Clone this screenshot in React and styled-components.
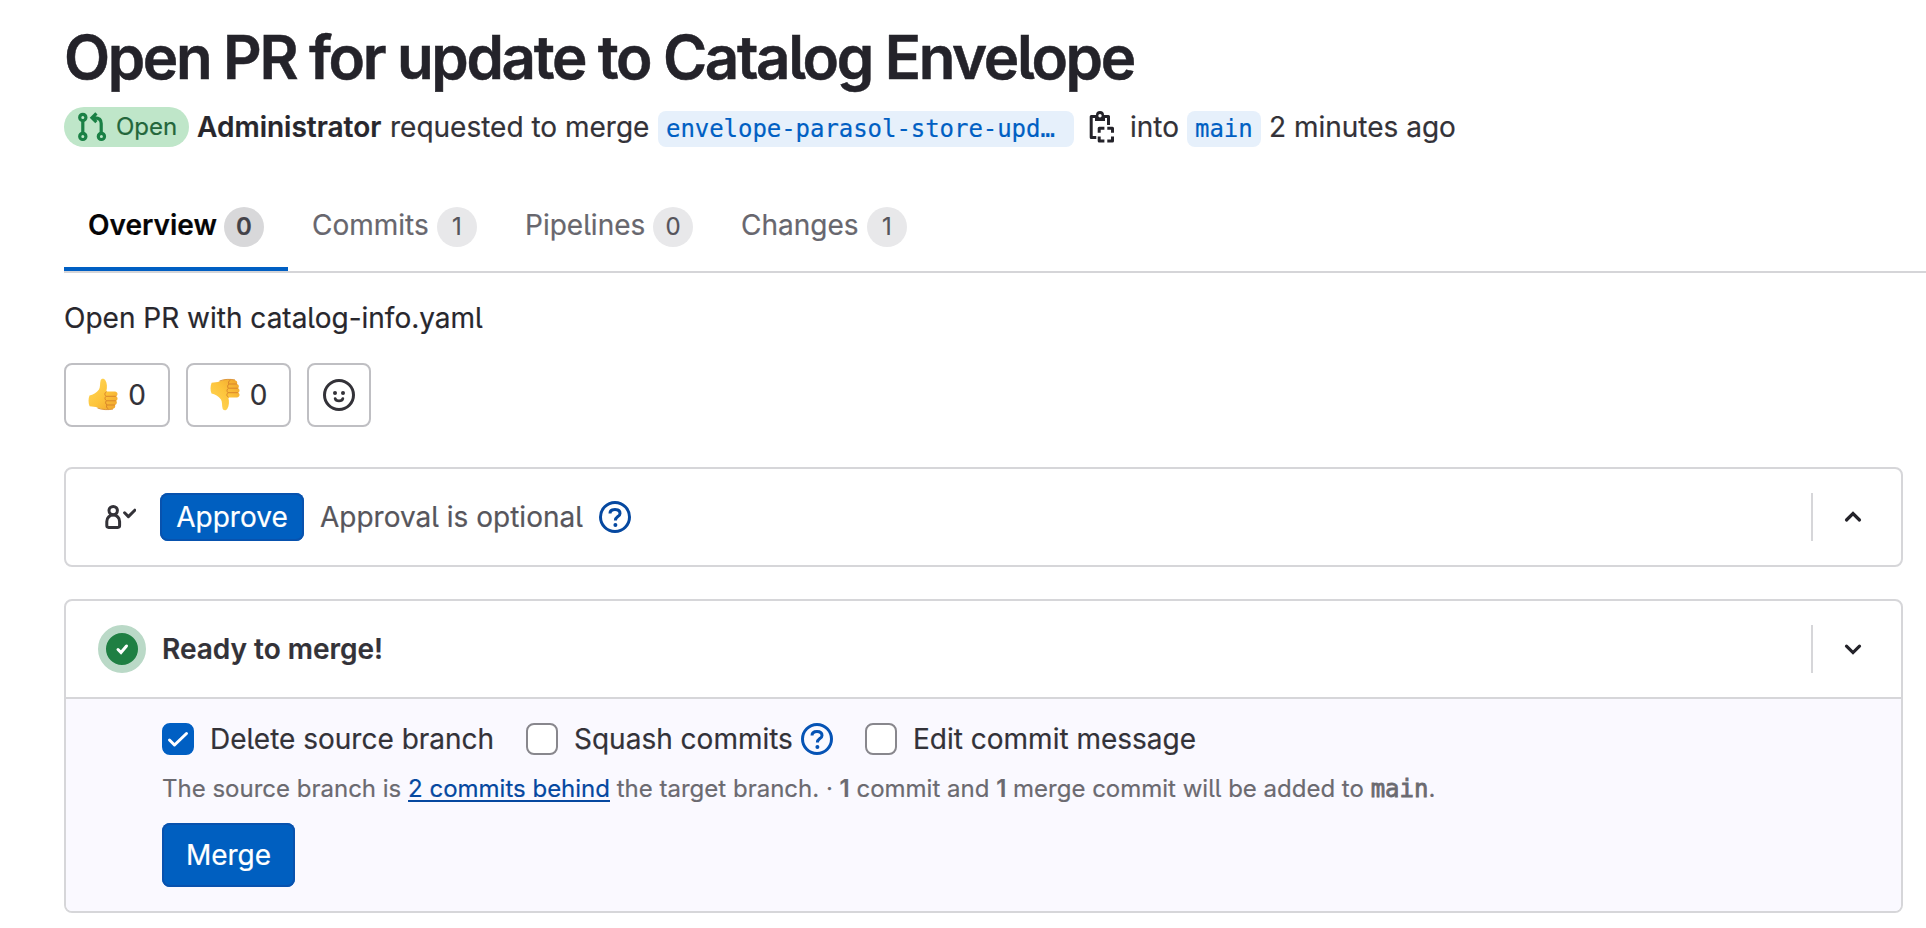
import React from "react";
import styled, { createGlobalStyle, css } from "styled-components";

const Global = createGlobalStyle`
  html, body { margin: 0; padding: 0; background: #fff; overflow: hidden; }
  * { box-sizing: border-box; }
  body {
    font-family: Inter, "Noto Sans", sans-serif;
    font-size: 28px;
    line-height: 40px;
    color: #333238;
    font-feature-settings: "cv05" 1;
    -webkit-font-smoothing: antialiased;
    -webkit-text-stroke: 0.2px;
  }
  button { font: inherit; font-feature-settings: inherit; color: inherit; margin: 0; }
  svg { display: block; flex: none; }
`;

const Page = styled.main`
  width: 1926px;
  height: 928px;
  padding: 23px 0 0 64px;
  overflow: hidden;
  white-space: nowrap;
`;

const Title = styled.h1`
  margin: 0;
  height: 68px;
  font-size: 60px;
  line-height: 68px;
  font-weight: 600;
  letter-spacing: -2.35px;
  color: #24232a;
  -webkit-text-stroke: 0.5px;
`;

const Meta = styled.div`
  display: flex;
  align-items: center;
  height: 40px;
  margin-top: 16px;
`;

const StatusBadge = styled.span`
  display: flex;
  align-items: center;
  gap: 8px;
  width: 125px;
  height: 40px;
  padding-left: 12px;
  border-radius: 20px;
  background: #bfe6c9;
  color: #24663b;
  font-size: 24px;
  margin-right: 8px;
  svg { color: #1a8045; }
`;

const Text = styled.span`
  display: block;
  width: ${(p) => (p.$w ? `${p.$w}px` : "auto")};
  margin-left: ${(p) => p.$ml || 0}px;
  flex: none;
  font-weight: ${(p) => (p.$bold ? 600 : 400)};
  color: ${(p) => p.$color || "inherit"};
`;

const BranchChip = styled.span`
  width: ${(p) => p.$w}px;
  height: 36px;
  margin-top: 4px;
  padding: 0 8px;
  border-radius: 8px;
  background: #e6f0fb;
  color: #005fc3;
  font: 24px/36px "DejaVu Sans Mono", "Liberation Mono", monospace;
  letter-spacing: -0.05px;
`;

const CopyButton = styled.span`
  display: flex;
  width: 56px;
  padding-left: 12px;
  color: #24232a;
`;

const Tabs = styled.nav`
  display: flex;
  height: 90px;
  margin-top: 36px;
  border-bottom: 2px solid #d5d5d8;
`;

const Tab = styled.div`
  display: flex;
  align-items: flex-start;
  justify-content: space-between;
  width: ${(p) => p.$w}px;
  padding: 22px 24px 0;
  height: 88px;
  color: #68676e;
  ${(p) =>
    p.$active &&
    css`
      color: #050506;
      font-weight: 600;
      border-bottom: 4px solid #005fc3;
    `}
`;

const Count = styled.span`
  width: 40px;
  height: 40px;
  margin-top: 2px;
  border-radius: 50%;
  background: ${(p) => (p.$active ? "#d8d8da" : "#e8e8ea")};
  color: ${(p) => (p.$active ? "#434248" : "#55545b")};
  font-size: 24px;
  line-height: 39px;
  text-align: center;
`;

const Description = styled.p`
  margin: 25px 0 0;
  height: 40px;
  color: #28272d;
`;

const Reactions = styled.div`
  display: flex;
  gap: 16px;
  margin-top: 25px;
`;

const ReactionButton = styled.button`
  display: flex;
  align-items: center;
  justify-content: center;
  gap: 8px;
  width: ${(p) => p.$w}px;
  height: 64px;
  padding: 0;
  border: 2px solid #bfbfc3;
  border-radius: 8px;
  background: #fff;
`;

const Card = styled.section`
  width: 1839px;
  margin-top: ${(p) => p.$top}px;
  border: 2px solid #d6d6d9;
  border-radius: 8px;
  overflow: hidden;
`;

const CardHeader = styled.div`
  display: flex;
  align-items: center;
  height: 96px;
  padding-left: 32px;
`;

const Toggle = styled.span`
  display: flex;
  align-items: center;
  width: 90px;
  height: 48px;
  margin-left: auto;
  padding-left: 24px;
  border-left: 2px solid #d6d6d9;
  color: #24232a;
`;

const PrimaryButton = styled.button`
  display: block;
  width: ${(p) => p.$w}px;
  height: ${(p) => p.$h}px;
  padding: 0;
  border: 0;
  border-radius: 8px;
  background: #005fc0;
  box-shadow: inset 0 0 0 2px #0852ae;
  color: #fff;
  text-align: center;
`;

const IconSlot = styled.span`
  display: flex;
  width: ${(p) => p.$w}px;
  padding-left: ${(p) => p.$pl || 0}px;
  color: ${(p) => p.$color || "#333238"};
`;

const StatusDot = styled.span`
  display: flex;
  align-items: center;
  justify-content: center;
  width: 48px;
  height: 48px;
  margin-right: 16px;
  border: 8px solid #bad9c7;
  border-radius: 50%;
  background: #1f7f43;
  color: #fff;
`;

const MergeBody = styled.div`
  height: 214px;
  padding: 20px 0 0 96px;
  border-top: 2px solid #d6d6d9;
  background: #faf9ff;
`;

const Options = styled.div`
  display: flex;
  align-items: center;
  height: 40px;
`;

const Checkbox = styled.span`
  display: flex;
  align-items: center;
  justify-content: center;
  width: 32px;
  height: 32px;
  margin-right: 16px;
  border: 2px solid ${(p) => (p.$checked ? "#005fc3" : "#88878d")};
  border-radius: 8px;
  background: ${(p) => (p.$checked ? "#005fc3" : "#fff")};
  color: #fff;
`;

const Note = styled.p`
  margin: 14px 0 18px;
  height: 32px;
  font-size: 24px;
  line-height: 32px;
  color: #6b6a70;
  b { font-weight: 600; }
`;

const CommitsLink = styled.a`
  color: #0548a0;
  text-decoration: underline;
  text-decoration-thickness: 2px;
  text-underline-offset: 3px;
`;

const MonoStrong = styled.span`
  font: 24px/32px "DejaVu Sans Mono", "Liberation Mono", monospace;
  -webkit-text-stroke: 0.8px;
`;

const Icon = ({ size = 32, children, box = 16, w = 2 }) => (
  <svg width={size} height={size} viewBox={`0 0 ${box} ${box}`} fill="none" stroke="currentColor" strokeWidth={w}>
    {children}
  </svg>
);

const MergeRequestIcon = () => (
  <Icon w={1.6}>
    <circle cx="3.4" cy="3.2" r="1.55" />
    <circle cx="3.4" cy="12.7" r="1.55" />
    <circle cx="12.7" cy="12.7" r="1.55" />
    <path d="M3.4 4.800V11M12.600 11V6.200C12.600 4.300 11.400 3.400 9.400 3.400H8.700M10.200 1.200 8 3.400l2.200 2.200" />
  </Icon>
);

const CopyIcon = () => (
  <Icon w={1.5}>
    <path d="M4.500 2.750H2.600V13.250H5.150M9.500 2.750H11.250V7" strokeLinejoin="round" />
    <path
      d="M4.500 2H5a2 2 0 0 1 4 0h.5v3h-5zM7 1.500a.85.85 0 1 0 0 1.700.85.85 0 0 0 0-1.700z"
      fill="currentColor"
      fillRule="evenodd"
      stroke="none"
    />
    <path
      d="M6.600 10.900V8.600H9.200M10.650 8.600H13.250V10.900M13.250 12.700V15.050H10.650M9.200 15.050H6.600V12.700"
      strokeLinejoin="round"
    />
  </Icon>
);

const HelpIcon = () => (
  <Icon w={1.5}>
    <circle cx="8" cy="8" r="7.25" />
    <path d="M5.500 6.200C5.500 4.800 6.600 4.200 8 4.200s2.500.7 2.500 2c0 1.700-2.300 1.500-2.300 3.500" />
    <circle cx="8.200" cy="12" r="1" fill="currentColor" stroke="none" />
  </Icon>
);

const SmileIcon = () => (
  <Icon w={1.5}>
    <circle cx="8" cy="8" r="7.25" />
    <path d="M6.100 9.800c.4 1.500 3.400 1.500 3.800 0" strokeLinecap="round" strokeWidth="1.4" />
    <circle cx="6" cy="7" r="1" fill="currentColor" stroke="none" />
    <circle cx="10" cy="7" r="1" fill="currentColor" stroke="none" />
  </Icon>
);

const ApprovalIcon = () => (
  <Icon w={1.5}>
    <circle cx="4.600" cy="4.800" r="2.100" />
    <path d="M1.400 12.300V10.200a3.200 3.200 0 0 1 6.400 0V12.300a.9.9 0 0 1-.9.9H2.300a.9.9 0 0 1-.9-.9z" />
    <path d="m10.300 5.900 1.900 1.900L15.400 4.600" strokeLinecap="round" strokeLinejoin="round" />
  </Icon>
);

const Chevron = ({ up }) => (
  <Icon w={1.6}>
    <path d={up ? "M4.750 9.500 8 6.300l3.250 3.200" : "M4.750 6.600 8 9.800l3.250-3.200"} strokeLinecap="round" />
  </Icon>
);

const ThumbShape = () => (
  <>
    <defs>
      <linearGradient id="skin" x1="0" y1="0" x2="1" y2="1">
        <stop offset="0" stopColor="#ffd95c" />
        <stop offset="0.55" stopColor="#fdc43b" />
        <stop offset="1" stopColor="#efa22b" />
      </linearGradient>
    </defs>
    <path
      d="M1.5 17.5C5 16.6 8.5 15 11 11.5c1.4-2.5.8-6 1.6-9 .5-2 3.2-2.3 4.6-.4 2 3 2.2 7.400 1.100 11.400h8.700c2.800.3 3.400 3.600 1.300 4.700 1.700 1 1.700 3.700-.1 4.600 1.200 1.200.8 3.600-1.100 4.200.6 2-.5 3.700-2.900 4-5 .7-10.200.7-14.200-1.200C7 28.500 4.500 29 1.600 28.300.2 25 .2 20.500 1.500 17.500z"
      fill="url(#skin)"
    />
    <path d="M18.300 13.800c-1.800.7-2 3.500-.1 4.400-1.700 1.100-1.500 3.700.2 4.500-1.300 1.200-.9 3.400.6 4.200-1 1.300-.5 3.200 1.100 3.900M18.500 18.300h9M18.700 22.800h8.700M19.200 27h7.300" fill="none" stroke="#d9852b" strokeWidth="1" strokeLinecap="round" />
    <path d="M9.500 30c4.500 1.900 10.500 2 15.500 1.100" fill="none" stroke="#d98d2a" strokeWidth="0.900" />
  </>
);

const Thumb = ({ down }) => (
  <svg width="32" height="34" viewBox="0 0 32 34">
    <g transform={down ? "matrix(1 0 0 -1 0 33)" : undefined}>
      <ThumbShape />
    </g>
  </svg>
);

const TABS = [
  { label: "Overview", count: 0, w: 224, active: true },
  { label: "Commits", count: 1, w: 213 },
  { label: "Pipelines", count: 0, w: 216 },
  { label: "Changes", count: 1, w: 214 },
];

export default function App() {
  return (
    <Page>
      <Global />
      <Title>Open PR for update to Catalog Envelope</Title>
      <Meta>
        <StatusBadge>
          <MergeRequestIcon />
          Open
        </StatusBadge>
        <Text $bold $w={193} $color="#28272d">Administrator</Text>
        <Text $w={268}>requested to merge</Text>
        <BranchChip $w={416}>envelope-parasol-store-upd…</BranchChip>
        <CopyButton>
          <CopyIcon />
        </CopyButton>
        <Text $w={57}>into</Text>
        <BranchChip $w={74}>main</BranchChip>
        <Text $ml={8}>2 minutes ago</Text>
      </Meta>

      <Tabs>
        {TABS.map((t) => (
          <Tab key={t.label} $w={t.w} $active={t.active}>
            <span>{t.label}</span>
            <Count $active={t.active}>{t.count}</Count>
          </Tab>
        ))}
      </Tabs>

      <Description>Open PR with catalog-info.yaml</Description>

      <Reactions>
        <ReactionButton $w={106}>
          <Thumb />
          <span>0</span>
        </ReactionButton>
        <ReactionButton $w={105}>
          <Thumb down />
          <span>0</span>
        </ReactionButton>
        <ReactionButton $w={64}>
          <SmileIcon />
        </ReactionButton>
      </Reactions>

      <Card $top={40}>
        <CardHeader>
          <IconSlot $w={62} $pl={6}>
            <ApprovalIcon />
          </IconSlot>
          <PrimaryButton $w={144} $h={48}>Approve</PrimaryButton>
          <Text $w={263} $ml={16} $color="#57565c">Approval is optional</Text>
          <IconSlot $w={48} $pl={16} $color="#0548a0">
            <HelpIcon />
          </IconSlot>
          <Toggle>
            <Chevron up />
          </Toggle>
        </CardHeader>
      </Card>

      <Card $top={32}>
        <CardHeader>
          <StatusDot>
            <Icon size={16}>
              <path d="m4 8.500 3 3 5.500-6.500" strokeWidth="3" strokeLinecap="round" />
            </Icon>
          </StatusDot>
          <Text $bold>Ready to merge!</Text>
          <Toggle>
            <Chevron />
          </Toggle>
        </CardHeader>
        <MergeBody>
          <Options>
            <Checkbox $checked>
              <Icon size={24} box={24}>
                <path d="m3.500 13 5 5L20.500 6.500" strokeWidth="3" strokeLinecap="round" strokeLinejoin="round" />
              </Icon>
            </Checkbox>
            <Text $w={316}>Delete source branch</Text>
            <Checkbox />
            <Text $w={227}>Squash commits</Text>
            <IconSlot $w={64} $color="#0553b5">
              <HelpIcon />
            </IconSlot>
            <Checkbox />
            <Text>Edit commit message</Text>
          </Options>
          <Note>
            The source branch is <CommitsLink>2 commits behind</CommitsLink> the target branch. · <b>1</b> commit and{" "}
            <b>1</b> merge commit will be added to <MonoStrong>main</MonoStrong>.
          </Note>
          <PrimaryButton $w={133} $h={64}>Merge</PrimaryButton>
        </MergeBody>
      </Card>
    </Page>
  );
}
